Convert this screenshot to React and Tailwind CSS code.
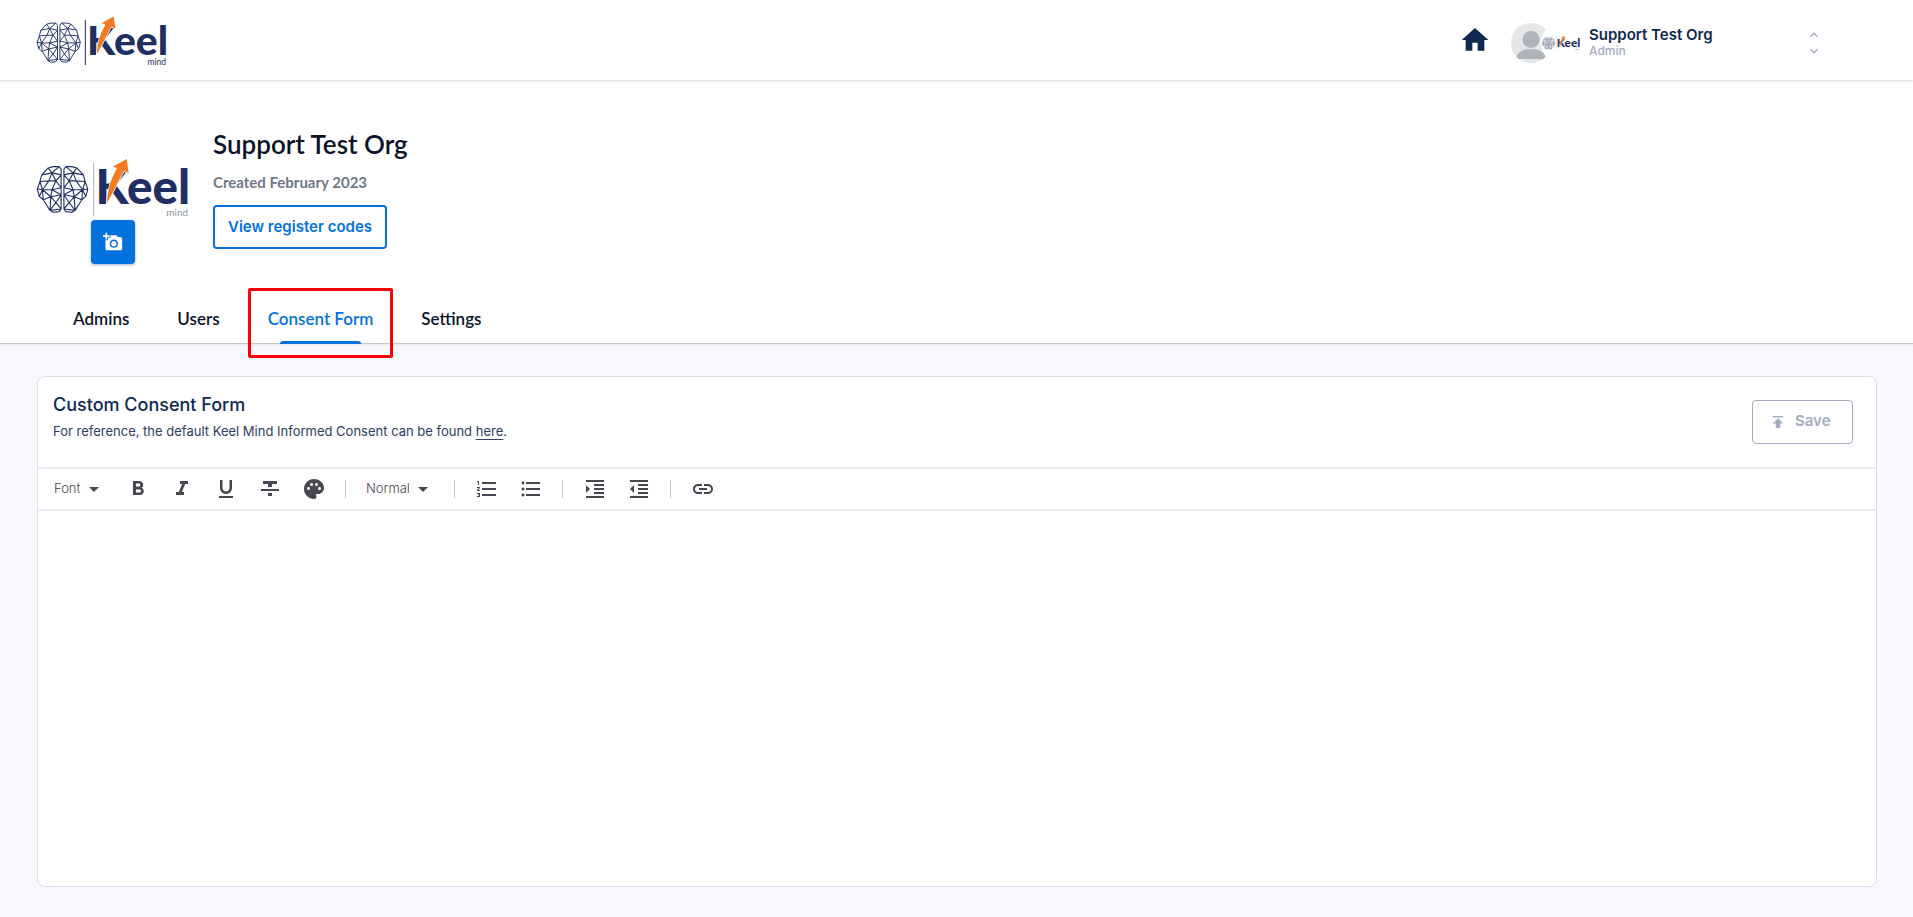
import { useState } from 'react'
import {
  MdAddAPhoto,
  MdArrowDropDown,
  MdExpandLess,
  MdExpandMore,
  MdFormatBold,
  MdFormatIndentDecrease,
  MdFormatIndentIncrease,
  MdFormatItalic,
  MdFormatListBulleted,
  MdFormatListNumbered,
  MdFormatStrikethrough,
  MdFormatUnderlined,
  MdHome,
  MdLink,
  MdPalette,
  MdPublish,
} from 'react-icons/md'

const TABS = ['Admins', 'Users', 'Consent Form', 'Settings']

function BrainHalf() {
  return (
    <path
      fill="none"
      stroke="#1f2f63"
      strokeWidth="1.1"
      strokeLinejoin="round"
      d="M25.3 13.3 23.3 10.7 17.3 10.7 12.3 12 5.7 19 4 25.7 1.3 33.3 3.3 40.7 7.3 44 14 54.7 17.3 56.7 23.3 56 25.3 53.3Z
         M12.3 12 16 17 23.3 10.7 M16 17 25.3 19 M5.7 19 16 17 13 25 4 25.7 M16 17 20 25 25.3 19
         M13 25 6.5 34 1.3 33.3 M4 25.7 6.5 34 16 34 M13 25 20 25 M16 34 20 25 25.3 32 16 34
         M6.5 34 3.3 40.7 M6.5 34 15 41 7.3 44 M16 34 15 41 25.3 39 16 34 M15 41 14 54.7 M15 41 20 47 25.3 39
         M20 47 14 54.7 25.3 53.3 20 47 M6.5 34 7.3 44"
    />
  )
}

function KeelLogo({ className, divider = '#b9bccb', caption = '#8d939c' }) {
  return (
    <svg viewBox="0 0 154 62" className={className} role="img" aria-label="Keel mind">
      <BrainHalf />
      <g transform="translate(53.4 0) scale(-1 1)">
        <BrainHalf />
      </g>
      <path d="M58 7V60" stroke={divider} strokeWidth="1.2" />
      <text x="60" y="48" fontSize="48" fontWeight="900" fill="#1f2f63" fontFamily="Lato, sans-serif">
        Keel
      </text>
      <path
        d="M91.3 3 77.3 10.7 81.6 12.2 C77 21 72.3 30 71.5 47 C76 40 82 27 88.4 15 L93.3 17Z"
        fill="#f47b20"
        stroke="#fff"
        strokeWidth="1.6"
        paintOrder="stroke"
      />
      <text x="153" y="60" textAnchor="end" fontSize="10" fill={caption} fontFamily="Lato, sans-serif">
        mind
      </text>
    </svg>
  )
}

function TopBar() {
  return (
    <header className="z-10 flex h-20 shrink-0 items-center justify-between bg-white pl-9 pr-[91px] shadow-[0_1px_2px_rgba(0,0,0,0.16)]">
      <KeelLogo className="w-[131px]" divider="#1f2f63" caption="#1f2f63" />
      <div className="flex items-center">
        <a href="#home" aria-label="Home" className="text-[#0f2850]">
          <MdHome className="size-8" />
        </a>
        <div className="ml-5 mt-1.5 flex items-center">
          <svg viewBox="0 0 40 40" className="size-10" aria-hidden="true">
            <clipPath id="face">
              <circle cx="20" cy="20" r="20" />
            </clipPath>
            <g clipPath="url(#face)">
              <rect width="40" height="40" fill="#e4e6e7" />
              <circle cx="20" cy="16.5" r="8.5" fill="#aeb4b7" />
              <path d="M5 36 C6 29 12 26 20 26 S34 29 35 36Z" fill="#aeb4b7" />
            </g>
          </svg>
          <div className="-ml-2.5 flex size-10 items-center justify-center rounded-full bg-white">
            <KeelLogo className="w-[38px]" />
          </div>
        </div>
        <button type="button" className="mt-1.5 ml-2 flex w-[233px] items-center justify-between text-left">
          <span className="flex flex-col">
            <span className="text-[15px] leading-4 font-semibold text-[#0f2850]">Support Test Org</span>
            <span className="text-xs leading-4 font-medium text-[#a3adc2]">Admin</span>
          </span>
          <span className="flex flex-col text-[#a3adc2]">
            <MdExpandLess className="size-4" />
            <MdExpandMore className="size-4" />
          </span>
        </button>
      </div>
    </header>
  )
}

function OrgProfile() {
  return (
    <section className="flex gap-6 px-9 pt-12">
      <div className="flex flex-col items-center pt-7">
        <KeelLogo className="w-[153px]" />
        <button
          type="button"
          aria-label="Change logo"
          className="mt-0.5 flex size-11 items-center justify-center rounded bg-[#0472dc] text-white shadow-[0_1px_3px_rgba(0,60,130,0.4)]"
        >
          <MdAddAPhoto className="size-5" />
        </button>
      </div>
      <div className="flex flex-col items-start">
        <h1 className="font-[Lato,sans-serif] text-[26px] leading-8 font-semibold text-[#0b1328]">Support Test Org</h1>
        <p className="mt-3 font-[Lato,sans-serif] text-[15px] leading-5 font-bold text-[#707887]">Created February 2023</p>
        <button
          type="button"
          className="mt-[13px] h-11 rounded border-2 border-[#0472dc] px-[13px] text-[15px] font-semibold text-[#0472dc]"
        >
          View register codes
        </button>
      </div>
    </section>
  )
}

function Tabs({ active, onSelect }) {
  return (
    <nav className="mt-8 flex gap-12 border-b border-[#c4c5d0] pl-[73px] shadow-[0_1px_2px_rgba(0,0,0,0.08)]">
      {TABS.map((tab) => (
        <button
          key={tab}
          type="button"
          onClick={() => onSelect(tab)}
          className={`relative h-[47px] font-[Lato,sans-serif] text-[17px] font-semibold ${tab === active ? 'text-[#0472dc]' : 'text-[#0b1328]'}`}
        >
          {tab}
          {tab === active && (
            <>
              <span className="absolute inset-x-3 -bottom-px h-[3px] rounded-t bg-[#0472dc]" />
              <span className="pointer-events-none absolute -inset-x-5 -top-2 -bottom-[15px] rounded-xs border-3 border-[#fb0007]" />
            </>
          )}
        </button>
      ))}
    </nav>
  )
}

function ToolButton({ icon: Icon, label }) {
  return (
    <button type="button" aria-label={label} className="flex h-10 w-11 items-center justify-center">
      <Icon className="size-6" />
    </button>
  )
}

function ToolSelect({ label, options, className }) {
  return (
    <div className={`relative flex items-center ${className}`}>
      <select aria-label={label} className="h-10 w-full appearance-none text-[13px] font-light text-[#484650] outline-none">
        {options.map((option) => (
          <option key={option}>{option}</option>
        ))}
      </select>
      <MdArrowDropDown className="pointer-events-none absolute right-0 size-6" />
    </div>
  )
}

function Separator() {
  return <span className="mr-2.5 ml-[9px] h-[18px] w-px bg-[#c4c5d0]" />
}

function Toolbar() {
  return (
    <div className="flex h-11 items-center border-y-2 border-[#ecedf4] pl-4 text-[#484650]">
      <ToolSelect label="Font" options={['Font', 'Serif', 'Monospace']} className="mr-2.5 w-[52px]" />
      <ToolButton icon={MdFormatBold} label="Bold" />
      <ToolButton icon={MdFormatItalic} label="Italic" />
      <ToolButton icon={MdFormatUnderlined} label="Underline" />
      <ToolButton icon={MdFormatStrikethrough} label="Strikethrough" />
      <ToolButton icon={MdPalette} label="Text colour" />
      <Separator />
      <ToolSelect label="Size" options={['Normal', 'Small', 'Large', 'Huge']} className="mx-2.5 w-[69px]" />
      <Separator />
      <ToolButton icon={MdFormatListNumbered} label="Numbered list" />
      <ToolButton icon={MdFormatListBulleted} label="Bulleted list" />
      <Separator />
      <ToolButton icon={MdFormatIndentIncrease} label="Increase indent" />
      <ToolButton icon={MdFormatIndentDecrease} label="Decrease indent" />
      <Separator />
      <ToolButton icon={MdLink} label="Link" />
    </div>
  )
}

function ConsentCard() {
  return (
    <section className="flex flex-1 flex-col rounded-lg border border-[#dadeea] bg-white">
      <div className="flex h-[90px] items-start justify-between px-[15px] pr-[23px]">
        <div className="pt-4">
          <h2 className="text-lg leading-6 font-medium text-[#0f2850]">Custom Consent Form</h2>
          <p className="mt-1 text-[13px] leading-5 text-[#2d4061]">
            For reference, the default Keel Mind Informed Consent can be found{' '}
            <a href="#consent" className="underline underline-offset-3">
              here
            </a>
            .
          </p>
        </div>
        <button
          type="button"
          className="mt-[23px] flex h-11 w-[101px] items-center gap-2 rounded border border-[#a3adc2] pl-4 text-[15px] font-semibold text-[#a3adc2]"
        >
          <MdPublish className="size-[18px]" />
          Save
        </button>
      </div>
      <Toolbar />
      <textarea aria-label="Consent form" className="w-full flex-1 resize-none rounded-b-lg p-4 text-sm outline-none" />
    </section>
  )
}

export default function App() {
  const [tab, setTab] = useState('Consent Form')

  return (
    <div className="flex min-h-screen flex-col bg-[#f8f9fd] font-[Inter,sans-serif]">
      <TopBar />
      <div className="bg-white">
        <OrgProfile />
        <Tabs active={tab} onSelect={setTab} />
      </div>
      <main className="flex flex-1 flex-col pt-8 pr-9 pb-[30px] pl-[37px]">
        <ConsentCard />
      </main>
    </div>
  )
}
